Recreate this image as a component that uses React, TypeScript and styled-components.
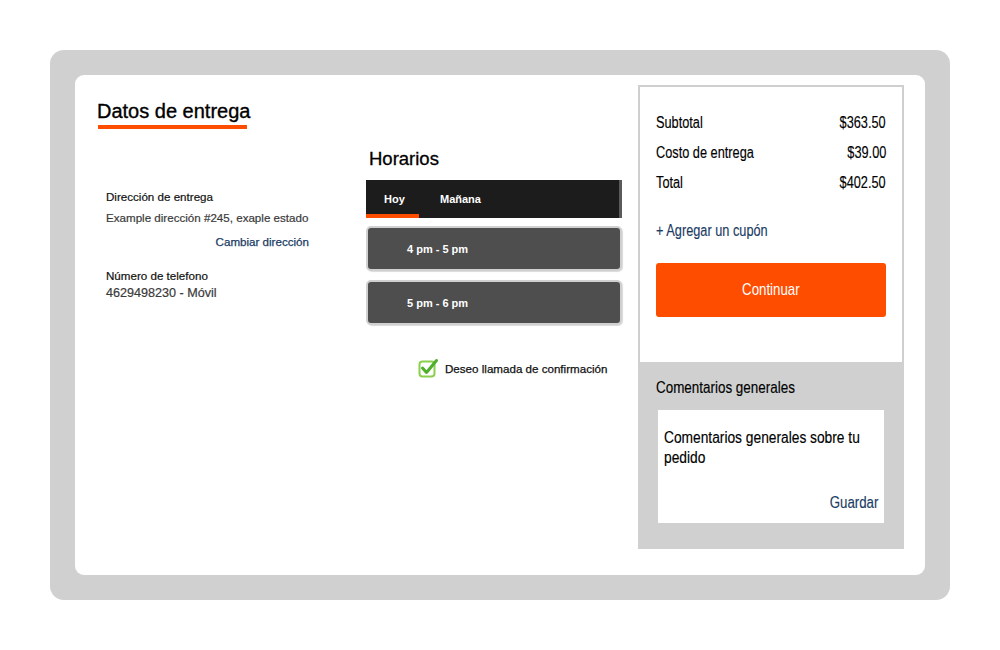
import styled, { createGlobalStyle } from "styled-components";

const GlobalStyle = createGlobalStyle`
  html, body {
    margin: 0;
    padding: 0;
    background: #ffffff;
    font-family: "Liberation Sans", Arial, sans-serif;
  }
`;

const Page = styled.div`
  width: 1000px;
  height: 650px;
  padding: 50px;
  box-sizing: border-box;
`;

const Frame = styled.div`
  height: 550px;
  background: #d0d0d0;
  border-radius: 14px;
  padding: 25px;
  box-sizing: border-box;
`;

const Card = styled.div`
  height: 500px;
  background: #ffffff;
  border-radius: 9px;
  display: flex;
  padding: 10px 21px 26px 0;
  box-sizing: border-box;
`;

const LeftCol = styled.div`
  width: 291px;
  display: flex;
  flex-direction: column;
`;

const Title = styled.h2`
  margin: 15px 0 0 22px;
  font-size: 20px;
  line-height: 22px;
  font-weight: normal;
  color: #000;
  -webkit-text-stroke: 0.35px #000;
`;

const Underline = styled.div`
  margin: 3px 0 0 23px;
  width: 149px;
  height: 4px;
  background: #ff4d00;
`;

const InfoBlock = styled.div`
  margin: 61px 0 0 31px;
  width: 203px;
  display: flex;
  flex-direction: column;
`;

const Label = styled.div`
  font-size: 11.6px;
  line-height: 14px;
  color: #111;
  -webkit-text-stroke: 0.2px #111;
  white-space: nowrap;
`;

const Value = styled.div<{ $size?: number }>`
  font-size: ${({ $size }) => $size || 11.6}px;
  line-height: 14px;
  margin-top: ${({ $size }) => ($size ? 3 : 7)}px;
  color: #3a3a3a;
  -webkit-text-stroke: 0.2px #3a3a3a;
  white-space: nowrap;
`;

const TextLink = styled.a`
  align-self: flex-end;
  margin-top: 10px;
  margin-bottom: 20px;
  font-size: 11.6px;
  line-height: 14px;
  color: #1a3b64;
  -webkit-text-stroke: 0.25px #1a3b64;
  text-decoration: none;
  white-space: nowrap;
`;

const MidCol = styled.div`
  width: 256px;
  display: flex;
  flex-direction: column;
`;

const SubTitle = styled.h3`
  margin: 63px 0 0 3px;
  font-size: 18.5px;
  line-height: 22px;
  font-weight: normal;
  color: #000;
  -webkit-text-stroke: 0.3px #000;
`;

const TabBar = styled.div`
  margin-top: 10px;
  height: 38px;
  background: #1c1c1c;
  border-right: 3px solid #5a5a5a;
  display: flex;
`;

const Tab = styled.div<{ $active?: boolean }>`
  width: ${({ $active }) => ($active ? 53 : 80)}px;
  padding: 3px 0 0 ${({ $active }) => ($active ? 18 : 21)}px;
  box-sizing: border-box;
  display: flex;
  align-items: center;
  color: #fff;
  font-size: 11px;
  font-weight: bold;
  border-bottom: 4px solid ${({ $active }) => ($active ? "#ff4d00" : "transparent")};
`;

const SlotList = styled.div`
  display: flex;
  flex-direction: column;
  gap: 9px;
  margin-top: 8px;
`;

const Slot = styled.div`
  height: 45px;
  background: #4e4e4e;
  border: 2px solid #d0d0d0;
  border-radius: 5px;
  box-sizing: border-box;
  display: flex;
  align-items: center;
  padding: 1px 0 0 39px;
  color: #fff;
  font-size: 11px;
  font-weight: bold;
  box-shadow: 1px 1px 1px rgba(0, 0, 0, 0.15);
`;

const CheckRow = styled.label`
  margin: 33px 0 0 52px;
  display: flex;
  align-items: center;
  gap: 6px;
  font-size: 11.6px;
  color: #111;
  -webkit-text-stroke: 0.25px #111;
  white-space: nowrap;
`;

const RightPanel = styled.div`
  margin-left: 16px;
  width: 266px;
  display: flex;
  flex-direction: column;
`;

const Summary = styled.div`
  border: 2px solid #cfcfcf;
  border-bottom: none;
  padding: 21px 16px 45px 16px;
  display: flex;
  flex-direction: column;
`;

// the reference uses a condensed face; squeeze Liberation Sans to match it
const Narrow = styled.span<{ $right?: boolean; $scale?: number }>`
  display: inline-block;
  white-space: nowrap;
  transform: scaleX(${({ $scale }) => $scale || 0.76});
  transform-origin: ${({ $right }) => ($right ? "right" : "left")} center;
`;

const Row = styled.div`
  display: flex;
  justify-content: space-between;
  font-size: 16.8px;
  line-height: 30px;
  color: #000;
  -webkit-text-stroke: 0.15px #000;
`;

const Coupon = styled.a`
  margin-top: 23px;
  font-size: 16.8px;
  line-height: 20px;
  color: #1a3b64;
  -webkit-text-stroke: 0.15px #1a3b64;
  text-decoration: none;
`;

const Continue = styled.button`
  margin-top: 22px;
  height: 54px;
  border: none;
  border-radius: 3px;
  background: #ff4d00;
  color: #fff;
  font-family: inherit;
  font-size: 17px;
  cursor: pointer;
  display: flex;
  align-items: center;
  justify-content: center;
`;

const Comments = styled.div`
  flex: 1;
  background: #d0d0d0;
  padding: 16px 20px 26px 18px;
  display: flex;
  flex-direction: column;
`;

const CommentsTitle = styled.div`
  font-size: 17px;
  line-height: 20px;
  color: #000;
  -webkit-text-stroke: 0.15px #000;
`;

const CommentBox = styled.div`
  margin-top: 12px;
  flex: 1;
  background: #fff;
  margin-left: 2px;
  padding: 18px 6px 10px 6px;
  display: flex;
  flex-direction: column;
  justify-content: space-between;
`;

const CommentText = styled.div`
  width: 238px;
  font-size: 16px;
  line-height: 20px;
  color: #000;
  -webkit-text-stroke: 0.15px #000;
  transform: scaleX(0.86);
  transform-origin: left top;
`;

const SaveLink = styled.a`
  align-self: flex-end;
  font-size: 17px;
  line-height: 20px;
  color: #1a3b64;
  -webkit-text-stroke: 0.15px #1a3b64;
  text-decoration: none;
`;

function CheckIcon() {
  return (
    <svg width="21" height="20" viewBox="0 0 21 20">
      <rect x="1.5" y="3.5" width="15" height="15" rx="3" fill="none" stroke="#8ccf4d" strokeWidth="2" />
      <path d="M4.5 10 L8.5 14.5 L18.5 2.5" fill="none" stroke="#4fae2b" strokeWidth="3" strokeLinecap="round" strokeLinejoin="round" />
    </svg>
  );
}

const rows = [
  { label: "Subtotal", value: "$363.50" },
  { label: "Costo de entrega", value: "$39.00" },
  { label: "Total", value: "$402.50" },
];

export default function App() {
  return (
    <>
      <GlobalStyle />
      <Page>
        <Frame>
          <Card>
            <LeftCol>
              <Title>Datos de entrega</Title>
              <Underline />
              <InfoBlock>
                <Label>Dirección de entrega</Label>
                <Value>Example dirección #245, exaple estado</Value>
                <TextLink href="#">Cambiar dirección</TextLink>
                <Label>Número de telefono</Label>
                <Value $size={12.6}>4629498230 - Móvil</Value>
              </InfoBlock>
            </LeftCol>
            <MidCol>
              <SubTitle>Horarios</SubTitle>
              <TabBar>
                <Tab $active>Hoy</Tab>
                <Tab>Mañana</Tab>
              </TabBar>
              <SlotList>
                <Slot>4 pm - 5 pm</Slot>
                <Slot>5 pm - 6 pm</Slot>
              </SlotList>
              <CheckRow>
                <CheckIcon />
                Deseo llamada de confirmación
              </CheckRow>
            </MidCol>
            <RightPanel>
              <Summary>
                {rows.map((r) => (
                  <Row key={r.label}>
                    <Narrow>{r.label}</Narrow>
                    <Narrow $right>{r.value}</Narrow>
                  </Row>
                ))}
                <Coupon href="#">
                  <Narrow>+ Agregar un cupón</Narrow>
                </Coupon>
                <Continue>
                  <Narrow $scale={0.78} style={{ transformOrigin: "center" }}>
                    Continuar
                  </Narrow>
                </Continue>
              </Summary>
              <Comments>
                <CommentsTitle>
                  <Narrow $scale={0.79}>Comentarios generales</Narrow>
                </CommentsTitle>
                <CommentBox>
                  <CommentText>Comentarios generales sobre tu pedido</CommentText>
                  <SaveLink href="#">
                    <Narrow $right $scale={0.78}>Guardar</Narrow>
                  </SaveLink>
                </CommentBox>
              </Comments>
            </RightPanel>
          </Card>
        </Frame>
      </Page>
    </>
  );
}
